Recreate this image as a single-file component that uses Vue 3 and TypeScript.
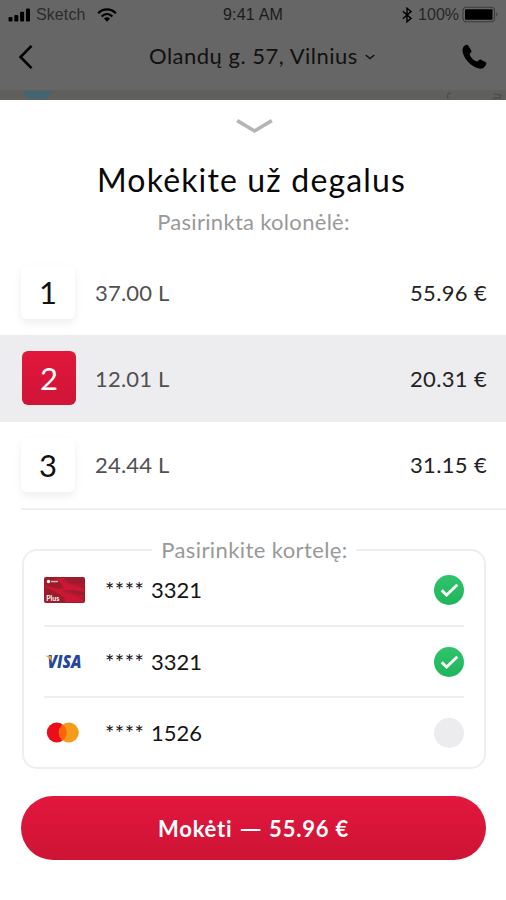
<script setup lang="ts">
import { ref } from 'vue'

interface Pump {
  id: number
  litres: string
  price: string
}

interface PaymentCard {
  kind: 'plus' | 'visa' | 'mastercard'
  digits: string
  checked: boolean
}

const pumps: Pump[] = [
  { id: 1, litres: '37.00 L', price: '55.96 €' },
  { id: 2, litres: '12.01 L', price: '20.31 €' },
  { id: 3, litres: '24.44 L', price: '31.15 €' },
]
const selectedPump = ref(2)

const cards = ref<PaymentCard[]>([
  { kind: 'plus', digits: '3321', checked: true },
  { kind: 'visa', digits: '3321', checked: true },
  { kind: 'mastercard', digits: '1526', checked: false },
])
</script>

<template>
  <div class="screen">
    <header class="top">
      <div class="status">
        <div class="status-left">
          <svg class="signal" width="23" height="14" viewBox="0 0 23 14">
            <rect x="0.5" y="9" width="4" height="4.5" rx="1" />
            <rect x="6.3" y="7" width="4" height="6.5" rx="1" />
            <rect x="12.1" y="3.8" width="4" height="9.7" rx="1" />
            <rect x="18" y="0.5" width="4" height="13" rx="1" />
          </svg>
          <span class="carrier">Sketch</span>
          <svg class="wifi" width="20" height="14" viewBox="0 0 20 14" fill="none" stroke="#000" stroke-width="2.3">
            <path d="M1.2 5.2C6.2.2 13.8.2 18.8 5.2" />
            <path d="M4.6 8.5C7.8 5.4 12.2 5.4 15.4 8.5" />
            <path d="M6.9 10.6Q10 8 13.1 10.6L10 13.8Z" fill="#000" stroke="none" />
          </svg>
        </div>
        <span class="clock">9:41 AM</span>
        <div class="status-right">
          <svg width="10" height="16" viewBox="0 0 10 16" fill="none" stroke="#000" stroke-width="1.4">
            <path d="M.8 4.3 9 11.4 5 14.8V1.2L9 4.6.8 11.7" />
          </svg>
          <span class="percent">100%</span>
          <svg width="38" height="17" viewBox="0 0 38 17">
            <rect x="1" y="1.2" width="31.5" height="14.6" rx="3.5" fill="none" stroke="#3c3c3c" stroke-width="1.1" />
            <rect x="3" y="3.2" width="27.5" height="10.6" rx="1" />
            <path d="M34.3 6.2Q36.8 8.5 34.3 10.8Z" fill="#3c3c3c" />
          </svg>
        </div>
      </div>
      <nav class="nav">
        <svg class="back" width="16" height="26" viewBox="0 0 16 26" fill="none" stroke="#000" stroke-width="2.6">
          <path d="M13.5 1.8 2.5 13 13.5 24.2" />
        </svg>
        <div class="address">
          <span>Olandų g. 57, Vilnius</span>
          <svg width="10" height="6" viewBox="0 0 10 6" fill="none" stroke="#111" stroke-width="1.4">
            <path d="M.7 1 5 4.6 9.3 1" />
          </svg>
        </div>
        <svg class="phone" width="25" height="26" viewBox="0 0 25 26">
          <path d="M1.2 3.2C2.6 1 5.2.1 6.2 1.5L9.4 6.7C10 7.9 8.1 9.1 7.6 10.2C8.4 13.4 11.8 16.6 15.2 17.4C16.5 17.2 17.1 15.3 18.6 15.6L23.6 18.3C25.3 19.4 23.7 21.5 22.4 23C20.7 24.9 17.5 25.1 14.6 23.8C7.5 20.8 2.2 14.4.8 8.5C.4 6.4.4 4.7 1.2 3.2Z" />
        </svg>
      </nav>
      <div class="map">
        <svg width="506" height="10" viewBox="0 0 506 10" fill="none">
          <path d="M23 1H53Q48 9 43 9H31Q25 9 23 1Z" fill="#436471" />
          <path d="M451 3Q446 3 448 9M494 4 501 5 500 8H493" stroke="#4d4c4a" stroke-width="1.3" />
        </svg>
      </div>
    </header>

    <main class="sheet">
      <svg class="handle" width="37" height="16" viewBox="0 0 37 16" fill="none" stroke="#b5b5b5" stroke-width="3.6">
        <path d="M1.2 2.6 18.5 13 35.8 2.6" />
      </svg>
      <h1>Mokėkite už degalus</h1>
      <p class="subtitle">Pasirinkta kolonėlė:</p>

      <section class="pumps">
        <div
          v-for="pump in pumps"
          :key="pump.id"
          class="pump"
          :class="{ selected: pump.id === selectedPump }"
          @click="selectedPump = pump.id"
        >
          <span class="tile">{{ pump.id }}</span>
          <span class="litres">{{ pump.litres }}</span>
          <span class="price">{{ pump.price }}</span>
        </div>
      </section>

      <fieldset class="cards">
        <legend>Pasirinkite kortelę:</legend>
        <div v-for="card in cards" :key="card.kind" class="card" @click="card.checked = !card.checked">
          <span class="brand">
            <svg v-if="card.kind === 'plus'" width="41" height="26" viewBox="0 0 41 26">
              <rect width="41" height="26" rx="2" fill="#9d1c2b" />
              <path d="M12 1H20Q24 8 40 11V15Q29 12 18 14Q26 18 39 18V25H21Q24 20 1 10V8Q17 14 20 11Q17 7 12 1Z" fill="#ca1736" />
              <path d="M19 3Q26 9 40 8M20 14Q28 16 40 22" fill="none" stroke="#b51931" stroke-width="2" />
              <circle cx="4.5" cy="4.5" r="1.7" fill="#fff" />
              <path d="M7 4.5H14" stroke="#e5a5ad" stroke-width="1.5" />
              <text x="2.2" y="23.5" class="plus-text">Plus</text>
            </svg>
            <svg v-else-if="card.kind === 'visa'" width="41" height="28" viewBox="0 0 41 28">
              <text x="3.4" y="20" class="visa-text" textLength="34" lengthAdjust="spacingAndGlyphs">VISA</text>
              <path d="M1 7.7H5.2Q7 7.7 7.4 9.7L8.2 14Q5.5 9.4 1 7.7Z" fill="#eba536" />
            </svg>
            <svg v-else width="41" height="22" viewBox="0 0 41 22">
              <circle cx="12.8" cy="10.5" r="10" fill="#eb0c1c" />
              <circle cx="24.8" cy="10.5" r="10" fill="#f59b1c" />
              <path d="M18.8 2.5A10 10 0 0 1 18.8 18.5A10 10 0 0 1 18.8 2.5Z" fill="#ff6508" />
            </svg>
          </span>
          <span class="stars">****</span>
          <span class="digits">{{ card.digits }}</span>
          <span class="check" :class="{ on: card.checked }">
            <svg v-if="card.checked" width="30" height="30" viewBox="0 0 30 30" fill="none" stroke="#fff" stroke-width="2.8">
              <path d="M7.7 15.2 12.6 20 23.3 9.7" />
            </svg>
          </span>
        </div>
      </fieldset>

      <button class="pay" type="button">Mokėti <span class="dash">—</span> 55.96 €</button>
    </main>
  </div>
</template>

<style>
body {
  margin: 0;
  background: #fff;
}
</style>

<style scoped>
* {
  box-sizing: border-box;
}
svg {
  display: block;
  flex: none;
}
.screen {
  width: 506px;
  height: 900px;
  overflow: hidden;
  background: #fff;
  color: #151515;
  font-family: Lato, "Noto Sans", sans-serif;
}
.top {
  height: 100px;
  background: #666;
  color: #111;
}
.status {
  display: grid;
  grid-template-columns: 1fr auto 1fr;
  align-items: center;
  height: 29px;
  padding: 0 6px 0 8px;
  font: 16px/20px "Liberation Sans", Arial, sans-serif;
}
.status-left,
.status-right {
  display: flex;
  align-items: center;
}
.status-right {
  justify-content: flex-end;
}
.carrier {
  margin: 0 11px 0 5px;
  letter-spacing: 0.1px;
  color: #2c2c2c;
}
.clock {
  padding-right: 2px;
  color: #1b1b1b;
  letter-spacing: 0.2px;
}
.percent {
  margin: 0 3px 0 6px;
  color: #262626;
}
.nav {
  display: flex;
  align-items: center;
  height: 61px;
  padding: 0 19px 6px 18px;
}
.address {
  display: flex;
  align-items: center;
  gap: 7px;
  margin-left: 115px;
  font-size: 22px;
  line-height: 28px;
  letter-spacing: 0.5px;
}
.address span {
  margin-top: -1px;
}
.phone {
  margin-left: auto;
}
.map {
  height: 10px;
  background: #615f5b;
}
.sheet {
  display: flex;
  flex-direction: column;
  height: 800px;
  padding-top: 18px;
}
.handle {
  align-self: center;
  margin-left: 2px;
}
h1 {
  margin: 26px 0 0;
  padding-right: 3px;
  text-align: center;
  font-size: 32px;
  font-weight: 400;
  line-height: 40px;
  letter-spacing: 1.15px;
  color: #080808;
  white-space: nowrap;
}
.subtitle {
  margin: 8px 0 0;
  padding-left: 1px;
  text-align: center;
  font-size: 22px;
  line-height: 28px;
  letter-spacing: 0.3px;
  color: #999;
}
.pumps {
  margin-top: 13px;
}
.pumps::after {
  content: "";
  display: block;
  height: 2px;
  margin-left: 21px;
  background: #efeff0;
}
.pump {
  display: flex;
  align-items: center;
  height: 86.4px;
  padding: 0 19px 0 21px;
  font-size: 22px;
  line-height: 28px;
}
.pump.selected {
  background: #ededef;
}
.tile {
  display: flex;
  align-items: center;
  justify-content: center;
  width: 54px;
  height: 54px;
  border-radius: 6px;
  background: #fff;
  box-shadow: 0 4px 9px rgba(0, 0, 0, 0.07);
  font-size: 31px;
  color: #111;
}
.selected .tile {
  margin-left: 1px;
  margin-right: -1px;
  margin-bottom: 1px;
  background: linear-gradient(#e2173c, #cf1437);
  box-shadow: none;
  color: #fff;
}
.litres,
.price {
  padding-top: 1px;
}
.litres {
  flex: 1;
  margin-left: 20px;
  color: #505050;
  letter-spacing: 0.2px;
}
.price {
  letter-spacing: 0.35px;
  color: #222;
}
.cards {
  width: 464px;
  min-width: 0;
  margin: 35px 0 0 22px;
  padding: 0 20px;
  border: 2px solid #eee;
  border-radius: 15px;
}
legend {
  margin: 0 auto;
  padding: 0 8px 0 9px;
  font-size: 22px;
  line-height: 10px;
  letter-spacing: 0.4px;
  color: #999;
}
.card {
  display: flex;
  align-items: center;
  height: 71.6px;
  border-bottom: 2px solid #eee;
  font-size: 22px;
  line-height: 28px;
}
.card:last-child {
  border-bottom: 0;
  height: 69px;
}
.brand {
  width: 41px;
  margin-right: 20px;
}
.plus-text {
  font: 700 7px Lato, sans-serif;
  fill: #fff;
}
.visa-text {
  font: italic 800 17px "Open Sans", sans-serif;
  fill: #21469b;
}
.stars {
  width: 46px;
  letter-spacing: 0.5px;
}
.digits {
  flex: 1;
  padding-top: 1px;
}
.check {
  width: 30px;
  height: 30px;
  border-radius: 50%;
  background: #ececee;
}
.check.on {
  background: linear-gradient(#30c36b, #20b45c);
}
.pay {
  flex: none;
  width: 465px;
  height: 64px;
  margin: 27px 0 0 21px;
  padding: 2px 0 0;
  border: 0;
  border-radius: 32px;
  background: linear-gradient(#e3173d, #cd1435);
  color: #fff;
  font: 700 22px/28px Lato, "Noto Sans", sans-serif;
  letter-spacing: 0.8px;
}
.dash {
  display: inline-block;
  transform: scaleX(1.3);
  margin: 0 3px;
}
</style>
